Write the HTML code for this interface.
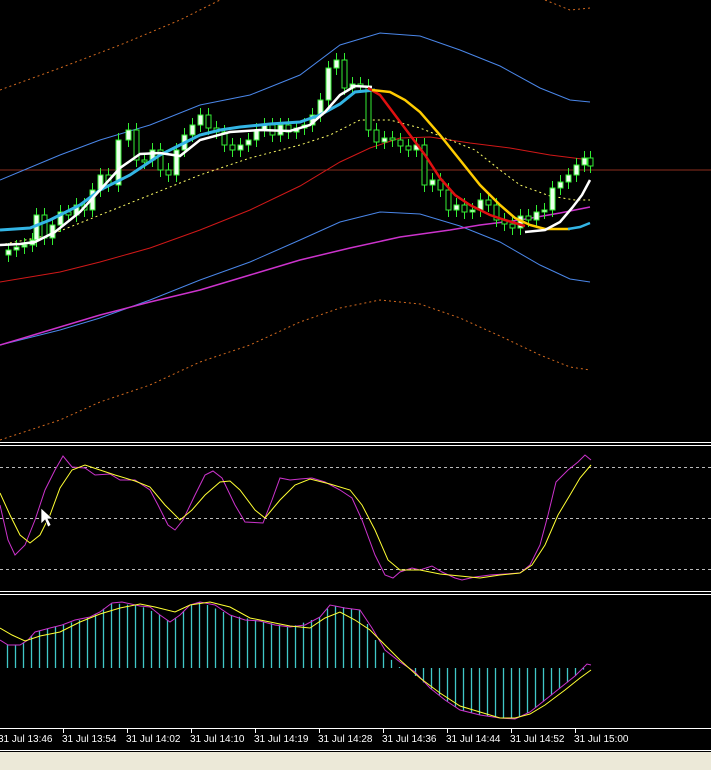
<!DOCTYPE html>
<html><head><meta charset="utf-8"><style>
html,body{margin:0;padding:0;background:#000;width:711px;height:770px;overflow:hidden}
svg{display:block}
text{font-family:"Liberation Sans",sans-serif;font-size:10px;fill:#fff}
</style></head><body>
<svg id="s" width="711" height="770" viewBox="0 0 711 770" xmlns="http://www.w3.org/2000/svg">
<rect width="711" height="770" fill="#000"/>
<line x1="0" y1="170" x2="711" y2="170" stroke="#8b2e1e" stroke-width="1"/>
<polyline fill="none" stroke="#d2691e" stroke-width="1" stroke-dasharray="2,3" points="0,90 60,68 120,45 180,20 220,0"/>
<polyline fill="none" stroke="#d2691e" stroke-width="1" stroke-dasharray="2,3" points="545,0 570,10 590,8"/>
<polyline fill="none" stroke="#4a86e8" stroke-width="1" points="0,180 60,155 100,140 150,125 200,105 250,95 300,75 340,45 380,33 420,36 460,50 500,66 540,88 570,100 590,102"/>
<polyline fill="none" stroke="#4a86e8" stroke-width="1" points="0,345 60,330 100,318 150,300 200,280 250,262 300,240 340,222 380,212 420,214 460,226 500,242 540,265 570,279 590,282"/>
<polyline fill="none" stroke="#d2691e" stroke-width="1" stroke-dasharray="2,3" points="0,440 60,420 100,402 150,385 200,362 250,345 300,322 340,308 380,300 420,304 460,318 500,336 540,355 570,367 590,370"/>
<polyline fill="none" stroke="#d01818" stroke-width="1" points="0,282 60,272 100,262 150,248 200,230 250,210 300,186 340,162 370,148 400,138 430,137 470,143 510,148 550,155 590,160"/>
<polyline fill="none" stroke="#ffff66" stroke-width="1" stroke-dasharray="2,3" points="0,245 50,235 100,215 150,195 200,175 250,158 300,145 330,135 360,120 390,120 420,128 450,140 475,150 500,170 520,185 550,196 575,200 590,200"/>
<polyline fill="none" stroke="#cc33cc" stroke-width="1.5" points="0,345 50,330 100,315 150,302 200,290 250,275 300,260 350,248 400,237 450,230 480,225 520,220 560,213 590,207"/>
<g id="candles"></g>
<polyline fill="none" stroke="#33b5e5" stroke-width="3" points="0,230 30,228 50,220 80,205 100,190 130,175 160,155 180,145 200,135 220,130 240,127 270,124 300,122 320,115 340,104 355,92 375,90"/>
<polyline fill="none" stroke="#ffffff" stroke-width="2.5" points="0,245 20,244 35,242 55,232 80,212 100,190 120,168 140,154 160,153 180,156 200,140 230,132 260,130 290,131 310,125 325,112 340,95 355,86 372,87"/>
<polyline fill="none" stroke="#e01010" stroke-width="2.5" points="368,88 380,95 395,115 410,135 425,155 440,178 455,195 470,205 490,215 505,220 525,226"/>
<polyline fill="none" stroke="#ffcc00" stroke-width="2.5" points="372,90 390,92 405,100 420,112 440,135 460,160 480,185 500,205 515,218 530,225 545,229 570,229"/>
<polyline fill="none" stroke="#ffffff" stroke-width="2.5" points="525,232 545,230 560,222 572,208 582,195 590,180"/>
<polyline fill="none" stroke="#33b5e5" stroke-width="2.5" points="568,229 580,227 590,223"/>
<line x1="0" y1="442.5" x2="711" y2="442.5" stroke="#fff"/>
<line x1="0" y1="445.5" x2="711" y2="445.5" stroke="#fff"/>
<line x1="0" y1="591.5" x2="711" y2="591.5" stroke="#fff"/>
<line x1="0" y1="594.5" x2="711" y2="594.5" stroke="#fff"/>
<g stroke="#bbb" stroke-dasharray="3,3" stroke-width="1">
<line x1="0" y1="467.5" x2="711" y2="467.5"/><line x1="0" y1="518.5" x2="711" y2="518.5"/><line x1="0" y1="569.5" x2="711" y2="569.5"/>
</g>
<polyline fill="none" stroke="#cc33cc" stroke-width="1" points="0,505 8,540 15,555 25,545 35,520 45,490 55,470 63,456 72,467 85,468 95,475 110,474 120,480 135,480 150,490 158,505 168,525 175,530 183,520 195,495 205,475 213,471 222,478 235,505 245,522 263,523 272,500 280,478 290,480 300,479 312,478 325,482 340,490 352,498 362,520 375,555 385,575 393,578 400,572 412,568 420,570 432,566 442,572 455,578 462,580 475,577 490,575 505,574 520,573 530,565 540,545 548,515 556,482 568,470 578,462 585,455 591,460"/>
<polyline fill="none" stroke="#ffff33" stroke-width="1" points="0,493 10,515 20,535 30,543 40,535 50,515 60,488 72,470 85,465 100,470 115,475 135,481 150,487 165,505 180,520 192,510 205,495 220,482 230,481 240,490 255,510 265,518 280,500 295,485 310,479 330,484 350,490 362,505 375,530 388,560 400,570 420,570 440,574 460,576 480,578 500,575 520,573 532,565 545,545 558,515 570,495 580,478 591,465"/>
<polygon fill="#fff" stroke="#000" stroke-width="0.7" points="41,508 41,524 45,520 48,527 51,525 48,519 53,519"/>
<g id="hist"></g>
<polyline fill="none" stroke="#cc33cc" stroke-width="1" points="0,640 8,645 20,645 28,640 35,632 50,628 62,625 75,620 90,617 100,612 112,603 122,602 140,606 150,607 160,615 170,622 180,615 190,605 200,602 215,605 230,615 245,620 260,621 275,625 290,627 305,625 320,617 330,605 345,608 360,610 372,628 385,650 400,662 415,672 430,688 445,700 460,710 480,715 500,718 515,719 530,712 545,700 560,688 575,676 587,664 591,665"/>
<polyline fill="none" stroke="#ffff33" stroke-width="1" points="0,628 12,635 25,641 40,636 60,632 80,622 100,614 120,608 140,604 155,607 175,612 190,605 210,602 230,607 250,618 270,622 290,626 310,628 325,618 340,612 355,620 370,630 385,645 400,660 420,678 440,693 460,706 480,712 500,718 515,718 530,714 545,705 565,690 580,678 591,670"/>
<line x1="0" y1="728.5" x2="711" y2="728.5" stroke="#fff"/>
<g id="ticks" stroke="#fff"></g>
<text x="-2" y="742">31 Jul 13:46</text>
<text x="62" y="742">31 Jul 13:54</text>
<text x="126" y="742">31 Jul 14:02</text>
<text x="190" y="742">31 Jul 14:10</text>
<text x="254" y="742">31 Jul 14:19</text>
<text x="318" y="742">31 Jul 14:28</text>
<text x="382" y="742">31 Jul 14:36</text>
<text x="446" y="742">31 Jul 14:44</text>
<text x="510" y="742">31 Jul 14:52</text>
<text x="574" y="742">31 Jul 15:00</text>
<line x1="0" y1="750.5" x2="711" y2="750.5" stroke="#fff"/>
<rect x="0" y="752" width="711" height="18" fill="#ece9d8"/>
</svg>
<script>
var NS="http://www.w3.org/2000/svg";
function el(n,a,p){var e=document.createElementNS(NS,n);for(var k in a)e.setAttribute(k,a[k]);p.appendChild(e);return e;}
var C=[[0,255],[8,250],[16,247],[24,245],[32,240],[36,215],[44,238],[52,225],[60,212],[68,215],[76,205],[84,210],[92,190],[100,175],[108,185],[118,140],[128,130],[136,160],[144,160],[152,150],[160,170],[168,175],[176,150],[184,135],[192,125],[200,115],[208,128],[216,132],[224,145],[232,150],[240,145],[248,140],[256,130],[264,125],[272,135],[280,125],[288,132],[296,128],[304,125],[312,115],[320,100],[328,68],[336,60],[344,88],[352,84],[360,86],[368,130],[376,142],[384,138],[392,140],[400,146],[408,150],[416,145],[424,185],[432,180],[440,190],[448,210],[456,205],[464,212],[472,210],[480,200],[488,205],[496,220],[504,224],[512,228],[520,216],[528,220],[536,212],[544,210],[552,188],[560,182],[568,175],[576,165],[584,158],[590,166]];
var g=document.getElementById('candles');
for(var i=1;i<C.length;i++){var x=C[i][0]+0.5,o=C[i-1][1],cl=C[i][1];
var t=Math.min(o,cl),b=Math.max(o,cl);if(b-t<2){b=t+2;}
el('line',{x1:x,y1:t-7,x2:x,y2:b+7,stroke:'#33ee33','stroke-width':1},g);
el('rect',{x:x-2.5,y:t,width:5,height:b-t,fill:(cl<o?'#eeffee':'#000'),stroke:'#33ee33','stroke-width':1},g);}
var h=document.getElementById('hist');
var pts=[[0,644],[20,645],[35,632],[62,625],[90,617],[112,603],[140,606],[160,615],[170,622],[190,605],[200,602],[230,615],[260,621],[290,627],[320,617],[330,605],[360,610],[380,650],[400,668]];
function mac(x){for(var k=0;k<pts.length-1;k++){if(x>=pts[k][0]&&x<=pts[k+1][0]){var f=(x-pts[k][0])/(pts[k+1][0]-pts[k][0]);return pts[k][1]+f*(pts[k+1][1]-pts[k][1]);}}return 668;}
var neg=[[410,672],[430,688],[445,700],[460,710],[480,715],[500,718],[515,719],[530,712],[545,700],[560,688],[575,676],[590,664]];
function nm(x){for(var k=0;k<neg.length-1;k++){if(x>=neg[k][0]&&x<=neg[k+1][0]){var f=(x-neg[k][0])/(neg[k+1][0]-neg[k][0]);return neg[k][1]+f*(neg[k+1][1]-neg[k][1]);}}return 668;}
for(var x=7;x<592;x+=8){
 if(x<405){var y=mac(x);el('line',{x1:x+.5,y1:y,x2:x+.5,y2:668,stroke:'#40c8c8','stroke-width':1.3},h);}
 else{var y2=nm(x);el('line',{x1:x+.5,y1:668,x2:x+.5,y2:y2,stroke:'#40c8c8','stroke-width':1.3},h);}
}
var tk=document.getElementById('ticks');
for(var i=0;i<9;i++){var x=63.5+i*64;el('line',{x1:x,y1:729,x2:x,y2:733},tk);}
</script>
</body></html>
